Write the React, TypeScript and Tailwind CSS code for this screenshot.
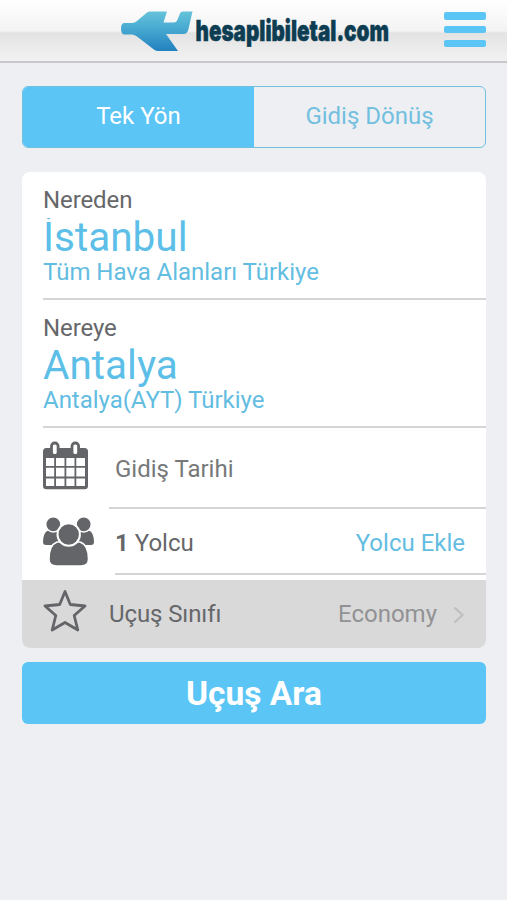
import { useState } from 'react';

const airports = [
	{ label: 'Nereden', city: 'İstanbul', detail: 'Tüm Hava Alanları Türkiye' },
	{ label: 'Nereye', city: 'Antalya', detail: 'Antalya(AYT) Türkiye' },
];

function Logo() {
	return (
		<svg width="274" height="46" viewBox="0 0 274 46" className="block overflow-visible">
			<defs>
				<linearGradient id="plane" x1="0" y1="0" x2="0" y2="1">
					<stop offset="0" stopColor="#66c3da" />
					<stop offset="0.5" stopColor="#43a5cf" />
					<stop offset="1" stopColor="#2280bf" />
				</linearGradient>
			</defs>
			<path
				d="M4 17H12Q15 17 17 15L27 6.500Q28.500 5.500 30 5.500H47L43.500 16.500H54Q56.500 16.500 57.500 13.500L60 7.500Q60.500 5.500 63 5.500H72.500L68.500 23Q67.500 28 63.500 28H46L58 45H38Q36 45 34.500 44L17 30.500Q14 28.500 12 28.500H4Q1 28 1 22.500Q1 17.500 4 17Z"
				fill="url(#plane)"
			/>
			<text
				x="75.500"
				y="34.500"
				textLength="193.500"
				lengthAdjust="spacingAndGlyphs"
				fontFamily="Inter, sans-serif"
				fontWeight="900"
				fontSize="29"
				fill="#0d3d52"
				stroke="#0d3d52"
				strokeWidth="0.500"
			>
				hesaplibiletal.com
			</text>
		</svg>
	);
}

function CalendarIcon() {
	return (
		<svg width="46" height="50" viewBox="0 0 46 50">
			<path
				fillRule="evenodd"
				fill="#636568"
				d="M3.500 7H41.500Q45 7 45 10.500V45Q45 48.300 41.500 48.300H3.500Q0 48.300 0 45V10.500Q0 7 3.500 7ZM3 17V25H11.200V17ZM13 17V25H21.500V17ZM23.300 17V25H31.500V17ZM33.300 17V25H42V17ZM3 26.800V35.600H11.200V26.800ZM13 26.800V35.600H21.500V26.800ZM23.300 26.800V35.600H31.500V26.800ZM33.300 26.800V35.600H42V26.800ZM3 37.400V45H11.200V37.400ZM13 37.400V45H21.500V37.400ZM23.300 37.400V45H31.500V37.400ZM33.300 37.400V45H42V37.400Z"
			/>
			<rect x="8.500" y="2" width="6.600" height="12.500" rx="3" fill="#fff" stroke="#636568" strokeWidth="2.800" />
			<rect x="29" y="2" width="6.600" height="12.500" rx="3" fill="#fff" stroke="#636568" strokeWidth="2.800" />
		</svg>
	);
}

function PassengersIcon() {
	return (
		<svg width="52" height="50" viewBox="0 0 52 50" fill="#636568">
			<path d="M4 14H20V28H3Q0 28 0 25Q0 17 4 14ZM47 14H31V28H48Q51 28 51 25Q51 17 47 14Z" />
			<g stroke="#fff" strokeWidth="1.500">
				<circle cx="10.300" cy="7.300" r="7.600" />
				<circle cx="40.700" cy="7.300" r="7.600" />
				<path d="M14 25H37Q45.500 28 45.500 42Q45.500 49 38 49H13.500Q6 49 6 42Q6 28 14 25Z" />
				<circle cx="25.700" cy="17.500" r="11.200" strokeWidth="2" />
			</g>
		</svg>
	);
}

function StarIcon() {
	return (
		<svg width="46" height="44" viewBox="0 0 46 44" className="overflow-visible">
			<path
				d="M22 1.500L27.300 14.500L42 16L31.200 25.500L34.800 40L22 32.500L9.200 40L12.800 25.500L2 16L16.700 14.500Z"
				fill="none"
				stroke="#636568"
				strokeWidth="2.800"
				strokeLinejoin="round"
			/>
		</svg>
	);
}

export default function App() {
	const [roundTrip, setRoundTrip] = useState(false);

	const active = 'bg-[#5bc5f5] text-white';
	const passive = 'text-[#72bfdf]';

	return (
		<div className="h-[900px] w-[507px] overflow-hidden bg-[#edeff3] font-['Roboto',sans-serif] text-2xl text-[#66676a]">
			{/* Header */}
			<header className="flex h-[63px] items-start border-b-2 border-[#c7c8ca] bg-[linear-gradient(#ffffff_0px,#f3f3f3_31px,#e3e3e3_33px,#f2f2f2_61px)] pl-[120px] pt-[6px]">
				<Logo />
				<button aria-label="Menü" className="ml-[50px] mt-[6px] flex h-[35px] w-[42px] flex-col justify-between">
					<span className="h-[7.500px] rounded-xs bg-[#5bc5f5]" />
					<span className="h-[7.500px] rounded-xs bg-[#5bc5f5]" />
					<span className="h-[7.500px] rounded-xs bg-[#5bc5f5]" />
				</button>
			</header>

			<main className="pl-[22px] pr-[21px] pt-[23px]">
				<div className="flex h-[62px] overflow-hidden rounded-md border border-[#72bfe0]">
					<button onClick={() => setRoundTrip(false)} className={`flex-1 pb-[3px] ${roundTrip ? passive : active}`}>
						Tek Yön
					</button>
					<button onClick={() => setRoundTrip(true)} className={`flex-1 pb-[3px] ${roundTrip ? active : passive}`}>
						Gidiş Dönüş
					</button>
				</div>

				{/* Arama formu */}
				<div className="mt-6 h-[476px] overflow-hidden rounded-lg bg-white">
					{airports.map((a) => (
						<div key={a.label} className="ml-[21px] h-[128px] border-b-2 border-[#d5d5d7] pt-[14px]">
							<div className="leading-[28px] tracking-[-0.1px]">{a.label}</div>
							<div className="text-[40.5px] leading-[46px] text-[#5dbfe8] [clip-path:inset(4px_0_0_0)]">{a.city}</div>
							<div className="leading-[25px] tracking-[-0.03px] text-[#63bde1]">{a.detail}</div>
						</div>
					))}

					<div className="flex h-[81px] pl-[21px]">
						<div className="w-[66px] pt-[13px]">
							<CalendarIcon />
						</div>
						<div className="flex flex-1 items-center border-b-2 border-[#d5d5d7] pl-[6px] pt-[2px] text-[#77787a]">
							Gidiş Tarihi
						</div>
					</div>

					<div className="flex h-[66px] pl-[21px]">
						<div className="w-[72px] pt-[8px]">
							<PassengersIcon />
						</div>
						<div className="flex flex-1 items-center justify-between border-b-2 border-[#d5d5d7] pr-[21px] pt-1">
							<span>
								<b>1</b> Yolcu
							</span>
							<span className="text-[#63bde1]">Yolcu Ekle</span>
						</div>
					</div>

					<div className="mt-[5px] flex h-[68px] items-center bg-[#d9d9d9] pl-[21px] pr-[21px]">
						<div className="w-[66px] pb-[5px]">
							<StarIcon />
						</div>
						<span className="flex-1 tracking-[-0.1px]">Uçuş Sınıfı</span>
						<span className="text-[#929294]">Economy</span>
						<svg width="12" height="20" viewBox="0 0 12 20" className="ml-4 mt-[2px]">
							<path d="M1.500 2.500L9.500 10L1.500 17.500" fill="none" stroke="#bfbfc1" strokeWidth="2.200" />
						</svg>
					</div>
				</div>

				<button className="mt-[14px] h-[62px] w-full rounded-md bg-[#5bc5f5] pt-[2px] text-[33.500px] font-bold text-white">
					Uçuş Ara
				</button>
			</main>
		</div>
	);
}
